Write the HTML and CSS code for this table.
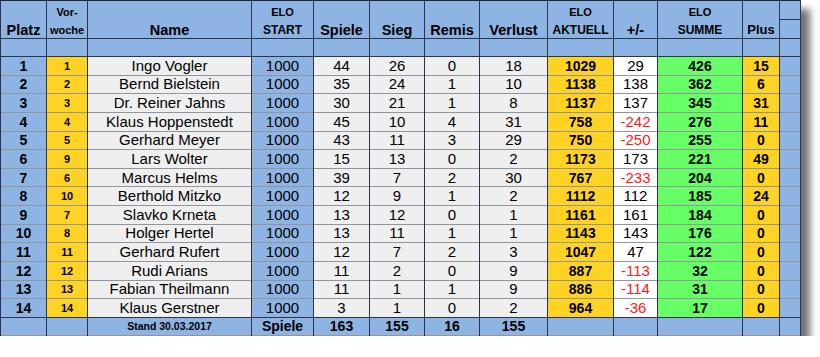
FILE: index.html
```html
<!DOCTYPE html>
<html lang="de">
<head>
<meta charset="utf-8">
<title>Rangliste</title>
<link rel="stylesheet" href="styles.css">
</head>
<body>
<table class="rank">
  <colgroup>
    <col class="c-platz"><col class="c-vor"><col class="c-name"><col class="c-start">
    <col class="c-spiele"><col class="c-sieg"><col class="c-remis"><col class="c-verl">
    <col class="c-akt"><col class="c-pm"><col class="c-summe"><col class="c-plus"><col class="c-end">
  </colgroup>
  <thead>
    <tr class="h1">
      <td class="blue"></td><td class="blue tiny">Vor-</td><td class="blue"></td><td class="blue tiny">ELO</td>
      <td class="blue"></td><td class="blue"></td><td class="blue"></td><td class="blue"></td>
      <td class="blue tiny">ELO</td><td class="blue"></td><td class="blue tiny">ELO</td><td class="blue"></td><td class="blue end"></td>
    </tr>
    <tr class="h2">
      <td class="blue big">Platz</td><td class="blue tiny">woche</td><td class="blue big">Name</td><td class="blue small">START</td>
      <td class="blue big">Spiele</td><td class="blue big">Sieg</td><td class="blue big">Remis</td><td class="blue big">Verlust</td>
      <td class="blue small">AKTUELL</td><td class="blue big">+/-</td><td class="blue small">SUMME</td><td class="blue mid">Plus</td><td class="blue"></td>
    </tr>
    <tr class="h3">
      <td class="blue"></td><td class="blue"></td><td class="blue"></td><td class="blue"></td><td class="blue"></td><td class="blue"></td><td class="blue"></td><td class="blue"></td><td class="blue"></td><td class="blue"></td><td class="blue"></td><td class="blue"></td><td class="blue"></td>
    </tr>
  </thead>
  <tbody>
    <tr><td class="blue b">1</td><td class="yel sm">1</td><td class="gray">Ingo Vogler</td><td class="blue">1000</td><td class="gray">44</td><td class="gray">26</td><td class="gray">0</td><td class="gray">18</td><td class="yel b">1029</td><td class="white">29</td><td class="green b">426</td><td class="yel b">15</td><td class="blue"></td></tr>
    <tr><td class="blue b">2</td><td class="yel sm">2</td><td class="gray">Bernd Bielstein</td><td class="blue">1000</td><td class="gray">35</td><td class="gray">24</td><td class="gray">1</td><td class="gray">10</td><td class="yel b">1138</td><td class="white">138</td><td class="green b">362</td><td class="yel b">6</td><td class="blue"></td></tr>
    <tr><td class="blue b">3</td><td class="yel sm">3</td><td class="gray">Dr. Reiner Jahns</td><td class="blue">1000</td><td class="gray">30</td><td class="gray">21</td><td class="gray">1</td><td class="gray">8</td><td class="yel b">1137</td><td class="white">137</td><td class="green b">345</td><td class="yel b">31</td><td class="blue"></td></tr>
    <tr><td class="blue b">4</td><td class="yel sm">4</td><td class="gray">Klaus Hoppenstedt</td><td class="blue">1000</td><td class="gray">45</td><td class="gray">10</td><td class="gray">4</td><td class="gray">31</td><td class="yel b">758</td><td class="white neg">-242</td><td class="green b">276</td><td class="yel b">11</td><td class="blue"></td></tr>
    <tr><td class="blue b">5</td><td class="yel sm">5</td><td class="gray">Gerhard Meyer</td><td class="blue">1000</td><td class="gray">43</td><td class="gray">11</td><td class="gray">3</td><td class="gray">29</td><td class="yel b">750</td><td class="white neg">-250</td><td class="green b">255</td><td class="yel b">0</td><td class="blue"></td></tr>
    <tr><td class="blue b">6</td><td class="yel sm">9</td><td class="gray">Lars Wolter</td><td class="blue">1000</td><td class="gray">15</td><td class="gray">13</td><td class="gray">0</td><td class="gray">2</td><td class="yel b">1173</td><td class="white">173</td><td class="green b">221</td><td class="yel b">49</td><td class="blue"></td></tr>
    <tr><td class="blue b">7</td><td class="yel sm">6</td><td class="gray">Marcus Helms</td><td class="blue">1000</td><td class="gray">39</td><td class="gray">7</td><td class="gray">2</td><td class="gray">30</td><td class="yel b">767</td><td class="white neg">-233</td><td class="green b">204</td><td class="yel b">0</td><td class="blue"></td></tr>
    <tr><td class="blue b">8</td><td class="yel sm">10</td><td class="gray">Berthold Mitzko</td><td class="blue">1000</td><td class="gray">12</td><td class="gray">9</td><td class="gray">1</td><td class="gray">2</td><td class="yel b">1112</td><td class="white">112</td><td class="green b">185</td><td class="yel b">24</td><td class="blue"></td></tr>
    <tr><td class="blue b">9</td><td class="yel sm">7</td><td class="gray">Slavko Krneta</td><td class="blue">1000</td><td class="gray">13</td><td class="gray">12</td><td class="gray">0</td><td class="gray">1</td><td class="yel b">1161</td><td class="white">161</td><td class="green b">184</td><td class="yel b">0</td><td class="blue"></td></tr>
    <tr><td class="blue b">10</td><td class="yel sm">8</td><td class="gray">Holger Hertel</td><td class="blue">1000</td><td class="gray">13</td><td class="gray">11</td><td class="gray">1</td><td class="gray">1</td><td class="yel b">1143</td><td class="white">143</td><td class="green b">176</td><td class="yel b">0</td><td class="blue"></td></tr>
    <tr><td class="blue b">11</td><td class="yel sm">11</td><td class="gray">Gerhard Rufert</td><td class="blue">1000</td><td class="gray">12</td><td class="gray">7</td><td class="gray">2</td><td class="gray">3</td><td class="yel b">1047</td><td class="white">47</td><td class="green b">122</td><td class="yel b">0</td><td class="blue"></td></tr>
    <tr><td class="blue b">12</td><td class="yel sm">12</td><td class="gray">Rudi Arians</td><td class="blue">1000</td><td class="gray">11</td><td class="gray">2</td><td class="gray">0</td><td class="gray">9</td><td class="yel b">887</td><td class="white neg">-113</td><td class="green b">32</td><td class="yel b">0</td><td class="blue"></td></tr>
    <tr><td class="blue b">13</td><td class="yel sm">13</td><td class="gray">Fabian Theilmann</td><td class="blue">1000</td><td class="gray">11</td><td class="gray">1</td><td class="gray">1</td><td class="gray">9</td><td class="yel b">886</td><td class="white neg">-114</td><td class="green b">31</td><td class="yel b">0</td><td class="blue"></td></tr>
    <tr><td class="blue b">14</td><td class="yel sm">14</td><td class="gray">Klaus Gerstner</td><td class="blue">1000</td><td class="gray">3</td><td class="gray">1</td><td class="gray">0</td><td class="gray">2</td><td class="yel b">964</td><td class="white neg">-36</td><td class="green b">17</td><td class="yel b">0</td><td class="blue"></td></tr>
  </tbody>
  <tfoot>
    <tr>
      <td class="blue"></td><td class="blue"></td><td class="blue stand">Stand 30.03.2017</td><td class="blue b">Spiele</td>
      <td class="blue b">163</td><td class="blue b">155</td><td class="blue b">16</td><td class="blue b">155</td>
      <td class="blue"></td><td class="blue"></td><td class="blue"></td><td class="blue"></td><td class="blue"></td>
    </tr>
  </tfoot>
</table>
</body>
</html>
```
FILE: styles.css
```css
html, body {
  margin: 0;
  padding: 0;
  background: #ffffff;
}

.rank {
  border-collapse: collapse;
  table-layout: fixed;
  width: 800px;
  font-family: "Liberation Sans", Arial, sans-serif;
  font-size: 15px;
  color: #000;
  border: 1px solid #1e2430;
  box-shadow: 9px 9px 7px rgba(0, 0, 0, 0.55);
}

.c-platz { width: 46px; }
.c-vor { width: 41px; }
.c-name { width: 164px; }
.c-start { width: 62px; }
.c-spiele { width: 56px; }
.c-sieg { width: 55px; }
.c-remis { width: 55px; }
.c-verl { width: 68px; }
.c-akt { width: 66px; }
.c-pm { width: 44px; }
.c-summe { width: 85px; }
.c-plus { width: 37px; }
.c-end { width: 21px; }

.rank td {
  padding: 0;
  text-align: center;
  vertical-align: middle;
  white-space: nowrap;
  overflow: hidden;
  line-height: 16px;
  border-left: 1px solid #2c3446;
  border-right: 1px solid #2c3446;
  border-top: 0;
  border-bottom: 1px solid rgba(40, 44, 60, 0.5);
}

.rank thead tr.h1 td { height: 16px; padding-top: 2px; border-bottom: 0; vertical-align: bottom; }
.rank thead tr.h1 td.end { border-bottom: 1px solid #2c3446; }
.rank thead tr.h2 td { height: 16px; padding-top: 2px; border-bottom: 1px solid #2c3446; vertical-align: bottom; }
.rank thead tr.h3 td { height: 17px; border-bottom: 1px solid #2c3446; }
.rank tbody td { height: 17.64px; }
.rank tbody tr:last-child td { border-bottom: 1px solid #2c3446; }
.rank tfoot td { height: 17px; }

.blue { background: #8db4e2; }
.yel { background: #ffd324; }
.gray { background: #efefef; }
.white { background: #ffffff; }
.green { background: #66ff66; }

.big { font-weight: bold; font-size: 14.5px; }
.mid { font-weight: bold; font-size: 13px; }
.small { font-weight: bold; font-size: 12px; }
.tiny { font-weight: bold; font-size: 11px; }
.b { font-weight: bold; font-size: 14px; }
.sm { font-weight: bold; font-size: 11px; }
.stand { font-weight: bold; font-size: 10.5px; }
.neg { color: #ff1a1a; }
```
